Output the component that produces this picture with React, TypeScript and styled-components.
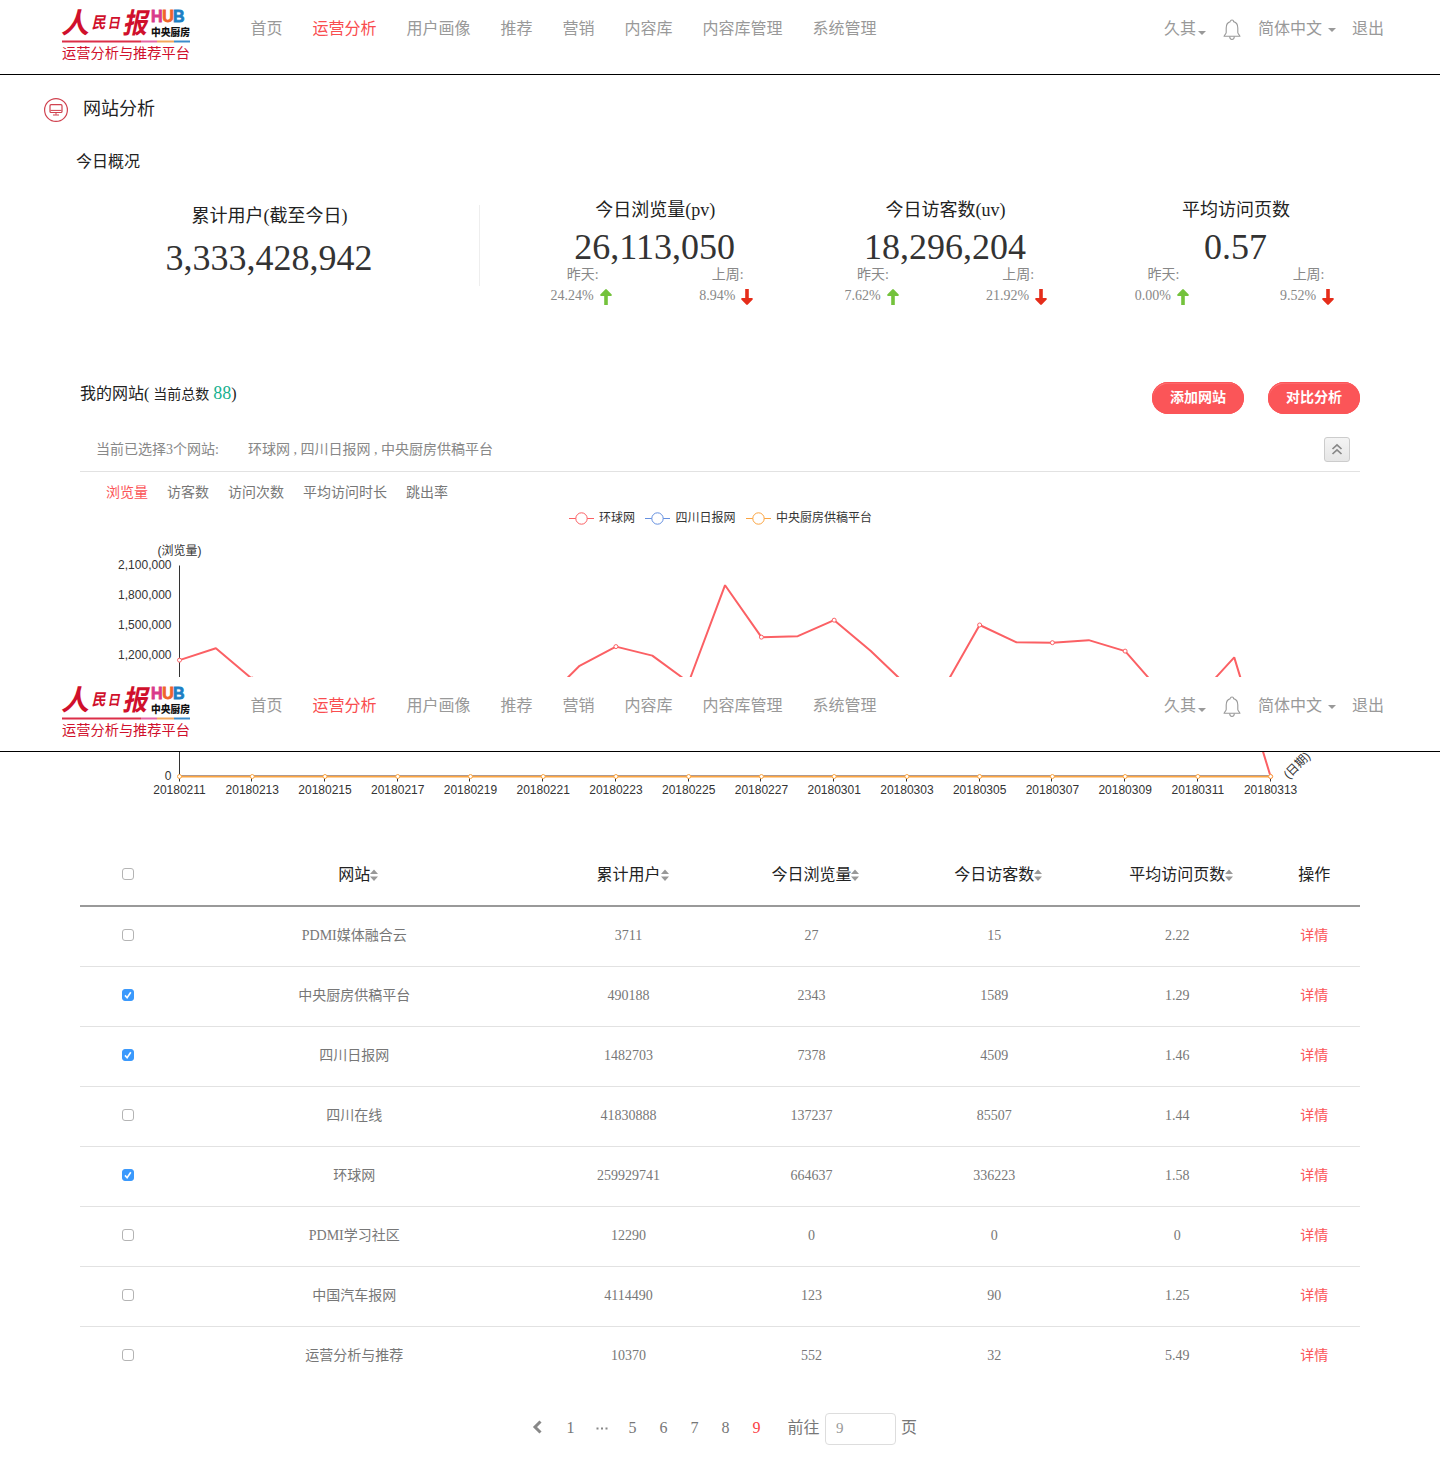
import React, { useState } from "react";
import styled, { createGlobalStyle, css } from "styled-components";

const serif = `"Liberation Serif", "Noto Sans CJK SC", serif`;
const sans = `"Liberation Sans", "Noto Sans CJK SC", sans-serif`;

const GlobalStyle = createGlobalStyle`
  * { box-sizing: border-box; }
  body { margin: 0; background: #fff; color: #333; font-family: ${serif}; font-size: 14px; }
`;

const Page = styled.div`
  position: relative;
  width: 1440px;
  height: 1481px;
  overflow: hidden;
  background: #fff;
`;

/* ---------- header ---------- */
const Header = styled.header`
  display: flex;
  align-items: flex-start;
  width: 100%;
  height: 75px;
  padding: 0 56px 0 61px;
  border-bottom: 1px solid #000;
  background: #fff;
  color: #999;
  font-size: 16px;
  line-height: 24px;
`;
const StickyHeader = styled.div`
  position: absolute;
  top: 677px;
  left: 0;
  width: 100%;
`;
const LogoSvg = styled.svg`
  display: block;
  flex: none;
  margin-right: 59.5px;
  overflow: visible;
`;
const Nav = styled.nav`
  display: flex;
  flex: 1;
  gap: 30px;
  padding-top: 17px;
`;
const NavLink = styled.span<{ $active?: boolean }>`
  color: ${(p) => (p.$active ? "#f94d4f" : "#999")};
`;
const UserArea = styled.div`
  display: flex;
  align-items: flex-start;
  padding-top: 17px;
`;
const UserItem = styled.span<{ $mr: number }>`
  display: flex;
  margin-right: ${(p) => p.$mr}px;
`;
const Caret = styled.i<{ $gap: number; $top: number }>`
  width: 0;
  height: 0;
  margin: ${(p) => p.$top}px 0 0 ${(p) => p.$gap}px;
  border: 4px solid transparent;
  border-top-color: #999;
  border-bottom: 0;
`;
const Bell = styled.svg`
  margin: 2px 17px 0 0;
`;

function Logo() {
  return (
    <LogoSvg width="130" height="62" viewBox="0 0 130 62">
      <g fill="#d0102c" fontFamily="Noto Sans CJK SC, sans-serif" fontWeight="700">
        <text transform="translate(0 32.5) skewX(-12)" fontSize="28">人</text>
        <text transform="translate(30.5 28) skewX(-12) scale(.88 1)" fontSize="16">民</text>
        <text transform="translate(46.5 28) skewX(-10) scale(.9 1)" fontSize="14">日</text>
        <text transform="translate(61.5 32.5) skewX(-12) scale(.88 1)" fontSize="28">报</text>
      </g>
      <g fontSize="16" fontWeight="700" fontFamily="Liberation Sans, sans-serif" strokeWidth=".8">
        <text x="90" y="22" fill="#d93a8b" stroke="#d93a8b">H</text>
        <text x="101.2" y="22" fill="#f0642c" stroke="#f0642c">U</text>
        <text x="112" y="22" fill="#1d7fc4" stroke="#1d7fc4">B</text>
      </g>
      <text x="90" y="35.5" fontSize="10" textLength="39" lengthAdjust="spacingAndGlyphs" fontWeight="900" fill="#111" fontFamily="Noto Sans CJK SC, sans-serif">中央厨房</text>
      <path d="M1 41.5h79" stroke="#dc2f48" strokeWidth="2" />
      <path d="M80 41.5h16" stroke="#e565a5" strokeWidth="2" />
      <path d="M96 41.5h17" stroke="#f2a65c" strokeWidth="2" />
      <path d="M113 41.5h16" stroke="#3c8ccb" strokeWidth="2" />
      <text x="1" y="58" fontSize="14" textLength="128" lengthAdjust="spacingAndGlyphs" fill="#d0102c" fontFamily="Noto Sans CJK SC, sans-serif">运营分析与推荐平台</text>
    </LogoSvg>
  );
}

const NAV = ["首页", "运营分析", "用户画像", "推荐", "营销", "内容库", "内容库管理", "系统管理"];

function TopBar() {
  return (
    <Header>
      <Logo />
      <Nav>
        {NAV.map((n) => (
          <NavLink key={n} $active={n === "运营分析"}>{n}</NavLink>
        ))}
      </Nav>
      <UserArea>
        <UserItem $mr={17}>久其<Caret $gap={2} $top={14} /></UserItem>
        <Bell width="18" height="22" viewBox="0 0 18 22" fill="none" stroke="#999" strokeWidth="1.1">
          <path d="M7.4 2.6C7.4 .4 10.6 .4 10.6 2.6C13.6 3.4 14.8 5.8 14.8 9V13.5C14.8 15 16.9 16 16.9 17.3H1.1C1.1 16 3.2 15 3.2 13.5V9C3.2 5.8 4.4 3.4 7.4 2.6" />
          <path d="M6.7 17.5C6.7 21.4 11.3 21.4 11.3 17.5" />
        </Bell>
        <UserItem $mr={16}>简体中文<Caret $gap={6} $top={11} /></UserItem>
        <span>退出</span>
      </UserArea>
    </Header>
  );
}

/* ---------- overview ---------- */
const TitleRow = styled.div`
  display: flex;
  align-items: center;
  gap: 15px;
  height: 70px;
  padding-left: 44px;
  font-size: 18px;
  line-height: 26px;
  color: #222;
`;
const TitleText = styled.h1`
  margin: 0 0 3px;
  font-size: 18px;
  font-weight: 400;
`;
const SubTitle = styled.h2`
  height: 60px;
  margin: 0;
  padding: 5px 0 0 76px;
  font-size: 16px;
  font-weight: 400;
  line-height: 24px;
  color: #222;
`;
const Stats = styled.section`
  display: flex;
  height: 176px;
`;
const TotalCard = styled.div`
  width: 420px;
  height: 81px;
  margin: 0 30px 0 60px;
  border-right: 1px solid #eee;
  text-align: center;
`;
const StatCard = styled.div`
  width: 290.4px;
  margin-top: -6px;
  text-align: center;
`;
const StatLabel = styled.div`
  font-size: 18px;
  line-height: 22px;
  color: #222;
`;
const StatValue = styled.div<{ $top: number }>`
  margin-top: ${(p) => p.$top}px;
  padding-right: 1px;
  font-size: 36px;
  line-height: 42px;
`;
const Compare = styled.div`
  display: grid;
  grid-template-columns: 1fr 1fr;
  margin-top: -4px;
  color: #888;
  line-height: 21px;
`;
const Rate = styled.div`
  display: flex;
  align-items: center;
  justify-content: center;
  gap: 6px;
  padding-right: 3px;
`;
const ArrowSvg = styled.svg`
  margin-top: 2px;
`;

function Arrow({ up }: { up: boolean }) {
  return (
    <ArrowSvg width="12" height="16" viewBox="0 0 12 16" fill={up ? "#74c23c" : "#e52d1a"}>
      <path
        transform={up ? undefined : "rotate(180 6 8)"}
        d="M5.2.5Q6 -.3 6.8.5L11.7 5.6Q12.2 7 10.8 7H7.8V16H4.2V7H1.2Q-.2 7 .3 5.6Z"
      />
    </ArrowSvg>
  );
}

const STATS = [
  { label: "今日浏览量(pv)", value: "26,113,050", day: "24.24%", week: "8.94%" },
  { label: "今日访客数(uv)", value: "18,296,204", day: "7.62%", week: "21.92%" },
  { label: "平均访问页数", value: "0.57", day: "0.00%", week: "9.52%" },
];

/* ---------- my sites ---------- */
const Content = styled.main`
  width: 1280px;
  margin: 0 auto;
`;
const SitesBar = styled.div`
  display: flex;
  align-items: flex-start;
  justify-content: space-between;
  height: 46px;
  padding-top: 1px;
  font-size: 16px;
  line-height: 24px;
  color: #222;
`;
const SitesTitle = styled.span`
  margin-top: -1px;
`;
const Small = styled.span`
  font-size: 14px;
`;
const Count = styled.span`
  font-size: 18px;
  color: #17b18f;
`;
const Actions = styled.div`
  display: flex;
  gap: 24px;
`;
const PillButton = styled.button`
  width: 92px;
  height: 32px;
  padding: 0 0 1px;
  border: 0;
  border-radius: 16px;
  background: #fb5558;
  box-shadow: inset 0 0 0 1px #fb5558, inset 1px 2px 0 -0.5px #ff7b7d;
  color: #fff;
  font: bold 14px/21px ${serif};
`;
const SelectedBar = styled.div`
  display: flex;
  align-items: center;
  height: 45px;
  padding: 0 10px 0 16px;
  border-bottom: 1px solid #e2e2e2;
  color: #888;
  line-height: 20px;
`;
const SelectedLabel = styled.span`
  padding-top: 1px;
`;
const SelectedNames = styled.span`
  flex: 1;
  padding: 1px 0 0 29px;
`;
const FoldButton = styled.button`
  display: flex;
  align-items: center;
  justify-content: center;
  width: 26px;
  height: 25px;
  padding: 0;
  border: 1px solid #ccc;
  border-radius: 3px;
  background: linear-gradient(#f4f4f4, #e6e6e6);
`;
const Tabs = styled.div`
  display: flex;
  gap: 19px;
  height: 38px;
  padding: 11px 0 0 26px;
  line-height: 20px;
`;
const Tab = styled.span<{ $active: boolean }>`
  color: ${(p) => (p.$active ? "#fb5558" : "#777")};
`;
const Legend = styled.div`
  display: flex;
  justify-content: center;
  gap: 10.5px;
  height: 20px;
  padding-left: 1px;
  font: 12px/16px ${sans};
  color: #333;
`;
const LegendItem = styled.span`
  display: flex;
  gap: 5px;
`;
const ChartSvg = styled.svg`
  display: block;
  font: 12px ${sans};
  fill: #333;
`;

const SERIES = [
  { name: "环球网", color: "#fb6064" },
  { name: "四川日报网", color: "#6590e0" },
  { name: "中央厨房供稿平台", color: "#fba440" },
];
const TRAFFIC = [
  1158000, 1276000, 970000, 880000, 800000, 760000, 720000, 700000, 710000, 700000, 740000,
  1102000, 1293000, 1203000, 938000, 1904000, 1387000, 1397000, 1556000, 1252000, 905000,
  870000, 1508000, 1337000, 1332000, 1357000, 1248000, 834000, 790000, 1186000, 0,
];
const DATES = [
  "20180211", "20180213", "20180215", "20180217", "20180219", "20180221", "20180223", "20180225",
  "20180227", "20180301", "20180303", "20180305", "20180307", "20180309", "20180311", "20180313",
];
const X0 = 99.5;
const STEP = 36.37;
const Y0 = 246.5;
const yOf = (v: number) => Y0 - (v / 300000) * 30.14;
const xOf = (i: number) => X0 + i * STEP;

function Chart() {
  const ticks = [0, 300000, 600000, 900000, 1200000, 1500000, 1800000, 2100000];
  return (
    <ChartSvg width="1280" height="290" viewBox="0 0 1280 290">
      <text x={X0} y="25" textAnchor="middle">(浏览量)</text>
      {ticks.map((t) => (
        <text key={t} x="91.5" y={yOf(t) + 3.5} textAnchor="end">{t.toLocaleString("en-US")}</text>
      ))}
      <path d={`M${X0} 35.5V${Y0}H${xOf(30)}`} fill="none" stroke="#333" />
      {DATES.map((d, i) => (
        <g key={d}>
          <path d={`M${Math.round(xOf(i * 2)) - 0.5} ${Y0}v5`} stroke="#333" />
          <text x={xOf(i * 2)} y="264" textAnchor="middle">{d}</text>
        </g>
      ))}
      <text transform="translate(1208.5 249.5) rotate(-45)">(日期)</text>
      <polyline
        fill="none" stroke={SERIES[0].color} strokeWidth="2" strokeLinejoin="bevel"
        points={TRAFFIC.map((v, i) => `${xOf(i)},${yOf(v)}`).join(" ")}
      />
      {TRAFFIC.map((v, i) => i % 2 === 0 && (
        <circle key={i} cx={xOf(i)} cy={yOf(v)} r="2" fill="#fff" stroke={SERIES[0].color} />
      ))}
      <path d={`M${X0} ${Y0 - 0.6}H${xOf(30)}`} stroke={SERIES[1].color} strokeWidth="2" />
      <path d={`M${X0} ${Y0 + 0.1}H${xOf(30)}`} stroke={SERIES[2].color} strokeWidth="2" />
      {DATES.map((d, i) => (
        <circle key={d} cx={xOf(i * 2)} cy={Y0} r="2" fill="#fff" stroke={SERIES[2].color} />
      ))}
    </ChartSvg>
  );
}

/* ---------- table ---------- */
const Table = styled.div`
  margin-top: 22px;
`;
const rowGrid = css`
  display: grid;
  grid-template-columns: 1fr 4fr 2fr 2fr 2fr 2fr 1fr;
  align-items: center;
  text-align: center;
`;
const HeadRow = styled.div`
  ${rowGrid}
  height: 65px;
  padding-bottom: 2px;
  border-bottom: 2px solid #999;
  font-size: 16px;
  color: #222;
`;
const Row = styled.div`
  ${rowGrid}
  height: 60px;
  padding-bottom: 2px;
  border-bottom: 1px solid #e2e2e2;
  color: #777;
  line-height: 20px;
  &:last-child { border-bottom: 0; padding-bottom: 3px; }
`;
const HeadCell = styled.div`
  display: flex;
  align-items: center;
  justify-content: center;
`;
const SortIcon = styled.svg`
  flex: none;
  margin: 5px -8px 0 0;
`;
const Detail = styled.a`
  color: #fb5558;
`;
const CheckCell = styled.label<{ $head?: boolean }>`
  display: flex;
  justify-content: center;
  padding: ${(p) => (p.$head ? "3px 0 0 5px" : "0 0 1px 5px")};
`;
const CheckBox = styled.input`
  appearance: none;
  width: 12px;
  height: 12px;
  margin: 0;
  border: 1px solid #b4b4b4;
  border-radius: 3px;
  background: #fff;
  &:checked {
    border-color: #3b99fc;
    background: #3b99fc;
  }
`;
const CheckMark = styled.svg`
  width: 12px;
  height: 12px;
  margin-left: -12px;
  pointer-events: none;
`;

function Check({ on = false, head }: { on?: boolean; head?: boolean }) {
  const [checked, setChecked] = useState(on);
  return (
    <CheckCell $head={head}>
      <CheckBox type="checkbox" checked={checked} onChange={() => setChecked(!checked)} />
      <CheckMark viewBox="0 0 12 12" fill="none" stroke={checked ? "#fff" : "none"} strokeWidth="1.6">
        <path d="M3 6.4L5.1 8.7L8.8 3.2" />
      </CheckMark>
    </CheckCell>
  );
}

const COLUMNS = ["网站", "累计用户", "今日浏览量", "今日访客数", "平均访问页数"];
const ROWS: { on?: boolean; cells: string[] }[] = [
  { cells: ["PDMI媒体融合云", "3711", "27", "15", "2.22"] },
  { on: true, cells: ["中央厨房供稿平台", "490188", "2343", "1589", "1.29"] },
  { on: true, cells: ["四川日报网", "1482703", "7378", "4509", "1.46"] },
  { cells: ["四川在线", "41830888", "137237", "85507", "1.44"] },
  { on: true, cells: ["环球网", "259929741", "664637", "336223", "1.58"] },
  { cells: ["PDMI学习社区", "12290", "0", "0", "0"] },
  { cells: ["中国汽车报网", "4114490", "123", "90", "1.25"] },
  { cells: ["运营分析与推荐", "10370", "552", "32", "5.49"] },
];

/* ---------- pagination ---------- */
const Pager = styled.div`
  display: flex;
  align-items: center;
  height: 32px;
  margin: 26px 0 0 444px;
  font-size: 16px;
  line-height: 24px;
  color: #777;
`;
const PageItem = styled.span<{ $active?: boolean }>`
  display: flex;
  align-items: center;
  justify-content: center;
  width: 31px;
  padding-bottom: 2px;
  color: ${(p) => (p.$active ? "#fb4145" : "#777")};
`;
const PrevIcon = styled.svg`
  margin: 0 5px 2px 0;
`;
const PageWord = styled.span<{ $left: number; $right: number }>`
  margin: -3px ${(p) => p.$right}px 0 ${(p) => p.$left}px;
`;
const PageInput = styled.input`
  width: 71px;
  height: 32px;
  padding: 0 10px 2px;
  border: 1px solid #ddd;
  border-radius: 4px;
  color: #999;
  font: 15px ${serif};
`;

export default function App() {
  return (
    <Page>
      <GlobalStyle />
      <TopBar />
      <TitleRow>
        <svg width="24" height="24" viewBox="0 0 24 24" fill="none" stroke="#d0424f">
          <circle cx="12" cy="12" r="11.4" strokeWidth="1.2" />
          <rect x="6" y="6.7" width="12" height="7.8" rx="1" strokeWidth="1.2" />
          <path d="M6.5 12.4h11M12 14.5v2.3M9 17h6" />
        </svg>
        <TitleText>网站分析</TitleText>
      </TitleRow>
      <SubTitle>今日概况</SubTitle>
      <Stats>
        <TotalCard>
          <StatLabel>累计用户(截至今日)</StatLabel>
          <StatValue $top={10}>3,333,428,942</StatValue>
        </TotalCard>
        {STATS.map((s) => (
          <StatCard key={s.label}>
            <StatLabel>{s.label}</StatLabel>
            <StatValue $top={5}>{s.value}</StatValue>
            <Compare>
              <span>昨天:</span>
              <span>上周:</span>
              <Rate>{s.day}<Arrow up /></Rate>
              <Rate>{s.week}<Arrow up={false} /></Rate>
            </Compare>
          </StatCard>
        ))}
      </Stats>
      <Content>
        <SitesBar>
          <SitesTitle>我的网站( <Small>当前总数</Small> <Count>88</Count>)</SitesTitle>
          <Actions>
            <PillButton>添加网站</PillButton>
            <PillButton>对比分析</PillButton>
          </Actions>
        </SitesBar>
        <SelectedBar>
          <SelectedLabel>当前已选择3个网站:</SelectedLabel>
          <SelectedNames>环球网 , 四川日报网 , 中央厨房供稿平台</SelectedNames>
          <FoldButton>
            <svg width="12" height="12" viewBox="0 0 12 12" fill="none" stroke="#888" strokeWidth="1.7">
              <path d="M1.5 6L6 1.8L10.5 6M1.5 11L6 6.8L10.5 11" />
            </svg>
          </FoldButton>
        </SelectedBar>
        <Tabs>
          {["浏览量", "访客数", "访问次数", "平均访问时长", "跳出率"].map((t, i) => (
            <Tab key={t} $active={i === 0}>{t}</Tab>
          ))}
        </Tabs>
        <Legend>
          {SERIES.map((s) => (
            <LegendItem key={s.name}>
              <svg width="25" height="16" viewBox="0 0 25 16" fill="#fff" stroke={s.color}>
                <path d="M0 8.5h25" />
                <circle cx="12.5" cy="8.5" r="5.7" />
              </svg>
              {s.name}
            </LegendItem>
          ))}
        </Legend>
        <Chart />
        <Table>
          <HeadRow>
            <Check head />
            {COLUMNS.map((c) => (
              <HeadCell key={c}>
                {c}
                <SortIcon width="8" height="12" viewBox="0 0 8 12" fill="#999">
                  <path d="M0 5L4 .5L8 5ZM0 7.5H8L4 12Z" />
                </SortIcon>
              </HeadCell>
            ))}
            <HeadCell>操作</HeadCell>
          </HeadRow>
          <div>
            {ROWS.map((r) => (
              <Row key={r.cells[0]}>
                <Check on={r.on} />
                {r.cells.map((c, i) => <span key={i}>{c}</span>)}
                <Detail>详情</Detail>
              </Row>
            ))}
          </div>
        </Table>
        <Pager>
          <PageItem>
            <PrevIcon width="10" height="14" viewBox="0 0 10 14" fill="none" stroke="#888" strokeWidth="3">
              <path d="M8.5 1.5L3 7L8.5 12.5" />
            </PrevIcon>
          </PageItem>
          <PageItem>1</PageItem>
          <PageItem>
            <svg width="12" height="3" viewBox="0 0 12 3" fill="#888">
              <path d="M.5.5h2v2h-2zM5 .5h2v2h-2zM9.5.5h2v2h-2z" />
            </svg>
          </PageItem>
          {["5", "6", "7", "8", "9"].map((n) => (
            <PageItem key={n} $active={n === "9"}>{n}</PageItem>
          ))}
          <PageWord $left={15.5} $right={5.5}>前往</PageWord>
          <PageInput defaultValue="9" />
          <PageWord $left={5} $right={0}>页</PageWord>
        </Pager>
      </Content>
      <StickyHeader>
        <TopBar />
      </StickyHeader>
    </Page>
  );
}
